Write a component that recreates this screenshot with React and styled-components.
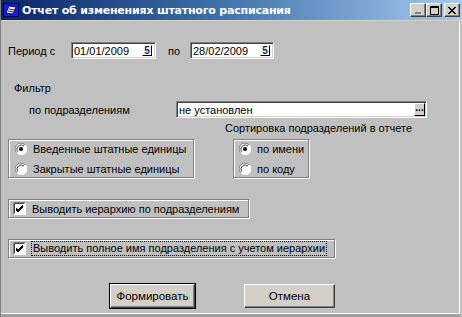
import styled, { createGlobalStyle } from 'styled-components'

const Global = createGlobalStyle`
  html, body {
    margin: 0;
    padding: 0;
    background: #c0c0c0;
  }
  body {
    font-family: "Liberation Sans", Arial, sans-serif;
    font-size: 11px;
    color: #000;
  }
`

const Window = styled.div`
  width: 462px;
  height: 317px;
  box-sizing: border-box;
  background: #c0c0c0;
  border-left: 1px solid #808080;
  display: flex;
  flex-direction: column;
  overflow: hidden;
`

const TitleBar = styled.div`
  height: 20px;
  display: flex;
  align-items: center;
  padding: 0 2px 0 2px;
  background: linear-gradient(to right, #0a246a 0%, #3a6ea5 45%, #a6caf0 100%);
  border-bottom: 1px solid #d4d0c8;
`

const TitleText = styled.div`
  flex: 1;
  margin-left: 3px;
  color: #fff;
  font-family: "DejaVu Sans", Tahoma, sans-serif;
  font-weight: bold;
  font-size: 11px;
  letter-spacing: -0.2px;
  white-space: nowrap;
`

const TitleButtons = styled.div`
  display: flex;
  align-items: center;
`

const TitleButton = styled.div`
  width: 16px;
  height: 14px;
  box-sizing: border-box;
  background: #d4d0c8;
  border-top: 1px solid #fff;
  border-left: 1px solid #fff;
  border-right: 1px solid #404040;
  border-bottom: 1px solid #404040;
  box-shadow: inset -1px -1px 0 #808080;
  display: flex;
  align-items: center;
  justify-content: center;
  margin-left: ${p => (p.$gap ? '2px' : '0')};
`

const Client = styled.div`
  flex: 1;
  display: flex;
  flex-direction: column;
  border-right: 1px solid #fff;
  border-bottom: 1px solid #fff;
  margin-right: 2px;
  margin-bottom: 3px;
  box-shadow: 0 3px 0 #a0a0a0;
`

const Row = styled.div`
  display: flex;
  align-items: center;
  margin-top: ${p => p.$top || 0}px;
  padding-left: ${p => p.$left || 0}px;
`

const Label = styled.span`
  width: ${p => (p.$w ? p.$w + 'px' : 'auto')};
  padding-left: ${p => p.$pad || 0}px;
  box-sizing: border-box;
  flex-shrink: 0;
  white-space: nowrap;
`

const Field = styled.div`
  width: ${p => p.$w}px;
  height: 17px;
  box-sizing: border-box;
  background: #fff;
  border-top: 1px solid #808080;
  border-left: 1px solid #808080;
  border-right: 1px solid #fff;
  border-bottom: 1px solid #fff;
  box-shadow: inset 1px 1px 0 #404040, inset -1px -1px 0 #d4d0c8;
  display: flex;
  align-items: center;
  padding: 0 2px 0 2px;
  white-space: nowrap;
  flex-shrink: 0;
`

const FieldText = styled.span`
  flex: 1;
`

const CalBtn = styled.span`
  width: 10px;
  height: 11px;
  box-sizing: border-box;
  border-top: 1px solid #fff;
  border-left: 1px solid #fff;
  border-right: 1px solid #000;
  border-bottom: 1px solid #000;
  background: #fff;
  color: #0a246a;
  font-size: 10px;
  line-height: 9px;
  text-align: center;
  font-weight: bold;
  margin-right: 1px;
`

const DotsBtn = styled.span`
  width: 11px;
  height: 13px;
  box-sizing: border-box;
  background: #d4d0c8;
  border-top: 1px solid #fff;
  border-left: 1px solid #fff;
  border-right: 1px solid #000;
  border-bottom: 1px solid #000;
  font-size: 10px;
  line-height: 8px;
  text-align: center;
  font-weight: bold;
  margin-right: -1px;
`

const Group = styled.div`
  width: ${p => p.$w}px;
  height: 39px;
  box-sizing: border-box;
  margin-left: ${p => p.$ml || 0}px;
  border: 1px solid #808080;
  box-shadow: 1px 1px 0 #fff, inset 1px 1px 0 #fff;
  display: flex;
  flex-direction: column;
  justify-content: center;
  gap: 7px;
  padding-left: ${p => p.$pl || 6}px;
  flex-shrink: 0;
`

const Option = styled.div`
  display: flex;
  align-items: center;
  gap: 6px;
  height: 13px;
  white-space: nowrap;
`

const CheckBox = styled.div`
  width: ${p => p.$w}px;
  height: 19px;
  box-sizing: border-box;
  border: 1px solid #808080;
  box-shadow: 1px 1px 0 #fff, inset 1px 1px 0 #fff;
  display: flex;
  align-items: center;
  gap: 6px;
  padding-left: 4px;
  white-space: nowrap;
`

const Focus = styled.span`
  outline: 1px dotted #000;
  padding: 0 1px;
  line-height: 13px;
`

const Button = styled.div`
  width: ${p => p.$w}px;
  height: 24px;
  box-sizing: border-box;
  margin-left: ${p => p.$ml || 0}px;
  background: #d4d0c8;
  border-top: 1px solid #fff;
  border-left: 1px solid #fff;
  border-right: 1px solid #404040;
  border-bottom: 1px solid #404040;
  box-shadow: ${p => (p.$default ? '0 0 0 1px #000, inset -1px -1px 0 #808080' : 'inset -1px -1px 0 #808080')};
  display: flex;
  align-items: center;
  justify-content: center;
  font-size: 11.5px;
  flex-shrink: 0;
`

const Radio = ({ checked }) => (
  <svg width="12" height="12" viewBox="0 0 12 12">
    <circle cx="6" cy="6" r="5.5" fill="#fff" />
    <path d="M10 2 A5.5 5.5 0 0 0 1.5 9.5" fill="none" stroke="#808080" strokeWidth="1" />
    <path d="M9 3 A4.3 4.3 0 0 0 2.6 8.6" fill="none" stroke="#404040" strokeWidth="1" />
    <path d="M2.5 10.2 A5.5 5.5 0 0 0 10.3 2.2" fill="none" stroke="#fff" strokeWidth="1" />
    {checked && <circle cx="6" cy="6" r="2" fill="#000" />}
  </svg>
)

const Check = () => (
  <svg width="13" height="13" viewBox="0 0 13 13">
    <rect x="0" y="0" width="13" height="13" fill="#fff" />
    <path d="M0.5 12.5 V0.5 H12.5" fill="none" stroke="#808080" />
    <path d="M1.5 11.5 V1.5 H11.5" fill="none" stroke="#404040" />
    <path d="M3 6 L5 8 L10 3 M3 7 L5 9 L10 4 M3 8 L5 10 L10 5" fill="none" stroke="#000" strokeWidth="1" />
  </svg>
)

const AppIcon = () => (
  <svg width="16" height="16" viewBox="0 0 16 16">
    <rect x="0.5" y="1.5" width="15" height="13" fill="#1a1ae0" stroke="#000050" />
    <path d="M3 11 L6 4 L13 5 L10 12 Z" fill="#e8e8ff" stroke="#000" strokeWidth="0.8" />
    <path d="M5 9 L11 10 M6 7 L12 8" stroke="#2030c0" strokeWidth="1" />
  </svg>
)

export default function App() {
  return (
    <Window>
      <Global />
      <TitleBar>
        <AppIcon />
        <TitleText>Отчет об изменениях штатного расписания</TitleText>
        <TitleButtons>
          <TitleButton>
            <svg width="8" height="8" viewBox="0 0 8 8"><rect x="1" y="6" width="6" height="2" fill="#808080" /></svg>
          </TitleButton>
          <TitleButton>
            <svg width="9" height="9" viewBox="0 0 9 9"><path d="M0.5 0.5 H8.5 V8.5 H0.5 Z M0.5 1.5 H8.5" fill="none" stroke="#000" /></svg>
          </TitleButton>
          <TitleButton $gap>
            <svg width="8" height="7" viewBox="0 0 8 7"><path d="M0 0 L7 7 M1 0 L8 7 M7 0 L0 7 M8 0 L1 7" stroke="#000" strokeWidth="1" /></svg>
          </TitleButton>
        </TitleButtons>
      </TitleBar>

      <Client>
        <Row $top={21} $left={7}>
          <Label $w={63}>Период с</Label>
          <Field $w={85}>
            <FieldText>01/01/2009</FieldText>
            <CalBtn>5</CalBtn>
          </Field>
          <Label $w={34} $pad={12}>по</Label>
          <Field $w={84}>
            <FieldText>28/02/2009</FieldText>
            <CalBtn>5</CalBtn>
          </Field>
        </Row>

        <Row $top={23} $left={13}>
          <Label>Фильтр</Label>
        </Row>

        <Row $top={7} $left={28}>
          <Label $w={147}>по подразделениям</Label>
          <Field $w={251}>
            <FieldText>не установлен</FieldText>
            <DotsBtn>...</DotsBtn>
          </Field>
        </Row>

        <Row $top={4} $left={224}>
          <Label>Сортировка подразделений в отчете</Label>
        </Row>

        <Row $top={5} $left={7}>
          <Group $w={186}>
            <Option><Radio checked /> Введенные штатные единицы</Option>
            <Option><Radio /> Закрытые штатные единицы</Option>
          </Group>
          <Group $w={76} $ml={39} $pl={5}>
            <Option><Radio checked /> по имени</Option>
            <Option><Radio /> по коду</Option>
          </Group>
        </Row>

        <Row $top={21} $left={7}>
          <CheckBox $w={241}>
            <Check /> Выводить иерархию по подразделениям
          </CheckBox>
        </Row>

        <Row $top={21} $left={7}>
          <CheckBox $w={327}>
            <Check /> <Focus>Выводить полное имя подразделения с учетом иерархии</Focus>
          </CheckBox>
        </Row>

        <Row $top={26} $left={109}>
          <Button $w={85} $default>Формировать</Button>
          <Button $w={91} $ml={49}>Отмена</Button>
        </Row>
      </Client>
    </Window>
  )
}
